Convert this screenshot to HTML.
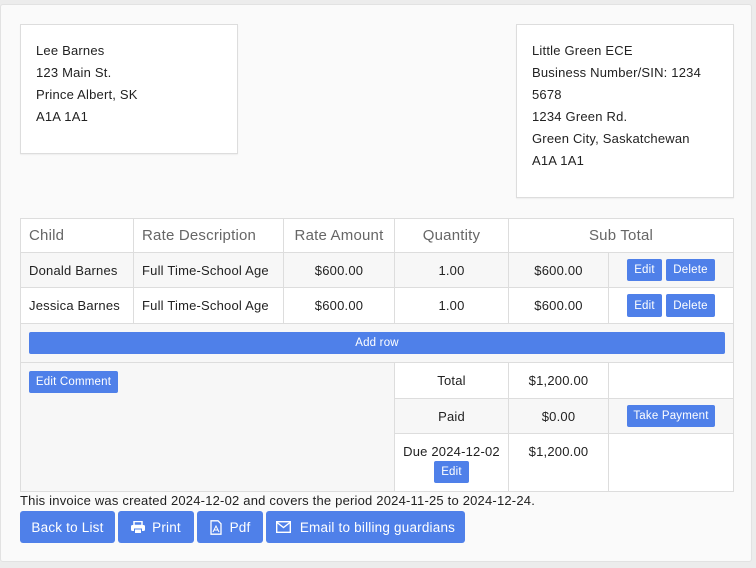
<!DOCTYPE html>
<html><head><style>
*{box-sizing:border-box;margin:0;padding:0}
body{width:756px;height:568px;background:#ececec;font-family:"Liberation Sans","DejaVu Sans",sans-serif;font-size:13px;letter-spacing:0.2px;color:#222;position:relative;overflow:hidden}
.card{position:absolute;left:0;top:4px;width:752px;height:558px;background:#fafafa;border:1px solid #e2e2e2;border-radius:3px}
.box{position:absolute;background:#fff;border:1px solid #ddd;box-shadow:0 1px 1px rgba(0,0,0,.05);line-height:22px;padding-top:15px;padding-left:15px}
.a{position:absolute}
.c{position:absolute;border:1px solid #ddd;display:flex;align-items:center;justify-content:center}
.l{justify-content:flex-start;padding-left:8px}
.btn{position:absolute;background:#4f80e9;color:#fff;border-radius:2px;font-size:11.5px;display:flex;align-items:center;justify-content:center}
.big{font-size:13.5px;border-radius:3px}
.h{color:#666;font-size:15px}
</style></head><body>
<div class="card"></div>
<div class="box" style="left:20px;top:24px;width:218px;height:130px">Lee Barnes<br>123 Main St.<br>Prince Albert, SK<br>A1A 1A1</div>
<div class="box" style="left:516px;top:24px;width:218px;height:174px">Little Green ECE<br>Business Number/SIN: 1234<br>5678<br>1234 Green Rd.<br>Green City, Saskatchewan<br>A1A 1A1</div>

<div class="a" style="left:20px;top:218px;width:714px;height:274px;background:#fff;border:1px solid #ddd"></div>
<div class="a" style="left:20px;top:252px;width:714px;height:36px;background:#f7f7f7"></div>
<div class="a" style="left:20px;top:323px;width:714px;height:40px;background:#f7f7f7"></div>
<div class="a" style="left:20px;top:362px;width:375px;height:130px;background:#f7f7f7"></div>
<div class="a" style="left:394px;top:398px;width:340px;height:36px;background:#f7f7f7"></div>

<div class="c l h" style="left:20px;top:218px;width:114px;height:35px">Child</div>
<div class="c l h" style="left:133px;top:218px;width:151px;height:35px">Rate Description</div>
<div class="c h" style="left:283px;top:218px;width:112px;height:35px">Rate Amount</div>
<div class="c h" style="left:394px;top:218px;width:115px;height:35px">Quantity</div>
<div class="c h" style="left:508px;top:218px;width:226px;height:35px">Sub Total</div>

<div class="c l" style="left:20px;top:252px;width:114px;height:36px">Donald Barnes</div>
<div class="c l" style="left:133px;top:252px;width:151px;height:36px">Full Time-School Age</div>
<div class="c" style="left:283px;top:252px;width:112px;height:36px">$600.00</div>
<div class="c" style="left:394px;top:252px;width:115px;height:36px">1.00</div>
<div class="c" style="left:508px;top:252px;width:101px;height:36px">$600.00</div>
<div class="c" style="left:608px;top:252px;width:126px;height:36px"></div>
<div class="btn" style="left:627px;top:259px;width:35px;height:22px">Edit</div>
<div class="btn" style="left:666px;top:259px;width:49px;height:22px">Delete</div>

<div class="c l" style="left:20px;top:287px;width:114px;height:37px">Jessica Barnes</div>
<div class="c l" style="left:133px;top:287px;width:151px;height:37px">Full Time-School Age</div>
<div class="c" style="left:283px;top:287px;width:112px;height:37px">$600.00</div>
<div class="c" style="left:394px;top:287px;width:115px;height:37px">1.00</div>
<div class="c" style="left:508px;top:287px;width:101px;height:37px">$600.00</div>
<div class="c" style="left:608px;top:287px;width:126px;height:37px"></div>
<div class="btn" style="left:627px;top:294px;width:35px;height:23px">Edit</div>
<div class="btn" style="left:666px;top:294px;width:49px;height:23px">Delete</div>

<div class="c" style="left:20px;top:323px;width:714px;height:40px"></div>
<div class="btn" style="left:29px;top:332px;width:696px;height:22px">Add row</div>

<div class="c" style="left:20px;top:362px;width:375px;height:130px"></div>
<div class="btn" style="left:29px;top:371px;width:89px;height:22px">Edit Comment</div>
<div class="c" style="left:394px;top:362px;width:115px;height:37px">Total</div>
<div class="c" style="left:508px;top:362px;width:101px;height:37px">$1,200.00</div>
<div class="c" style="left:608px;top:362px;width:126px;height:37px"></div>
<div class="c" style="left:394px;top:398px;width:115px;height:36px">Paid</div>
<div class="c" style="left:508px;top:398px;width:101px;height:36px">$0.00</div>
<div class="c" style="left:608px;top:398px;width:126px;height:36px"></div>
<div class="btn" style="left:627px;top:405px;width:88px;height:22px">Take Payment</div>
<div class="c" style="left:394px;top:433px;width:115px;height:59px;align-items:flex-start;padding-top:10px">Due 2024-12-02</div>
<div class="btn" style="left:434px;top:461px;width:35px;height:22px">Edit</div>
<div class="c" style="left:508px;top:433px;width:101px;height:59px;align-items:flex-start;padding-top:10px">$1,200.00</div>
<div class="c" style="left:608px;top:433px;width:126px;height:59px"></div>

<div class="a" style="left:20px;top:493px;font-size:13px">This invoice was created 2024-12-02 and covers the period 2024-11-25 to 2024-12-24.</div>
<div class="btn big" style="left:20px;top:511px;width:95px;height:32px">Back to List</div>
<div class="btn big" style="left:118px;top:511px;width:76px;height:32px"><svg width="14" height="13" viewBox="0 0 14 13" style="margin-right:7px"><rect x="3" y="0.5" width="8" height="4" fill="none" stroke="#fff" stroke-width="1.5"/><rect x="0" y="4" width="14" height="6" rx="1.5" fill="#fff"/><rect x="3.5" y="8" width="7" height="4.5" fill="#fff" stroke="#4f80e9" stroke-width="1"/></svg>Print</div>
<div class="btn big" style="left:197px;top:511px;width:66px;height:32px"><svg width="12" height="15" viewBox="0 0 12 15" style="margin-right:8px"><path d="M1 .8h7l3 3v10.4H1z" fill="none" stroke="#fff" stroke-width="1.3"/><path d="M3 12l3-6 3 6M4 10h4" fill="none" stroke="#fff" stroke-width="1"/></svg>Pdf</div>
<div class="btn big" style="left:266px;top:511px;width:199px;height:32px"><svg width="15" height="12" viewBox="0 0 15 12" style="margin-right:9px"><rect x=".7" y=".7" width="13.6" height="10.6" fill="none" stroke="#fff" stroke-width="1.4"/><path d="M1 1.5l6.5 5 6.5-5" fill="none" stroke="#fff" stroke-width="1.4"/></svg>Email to billing guardians</div>
</body></html>
